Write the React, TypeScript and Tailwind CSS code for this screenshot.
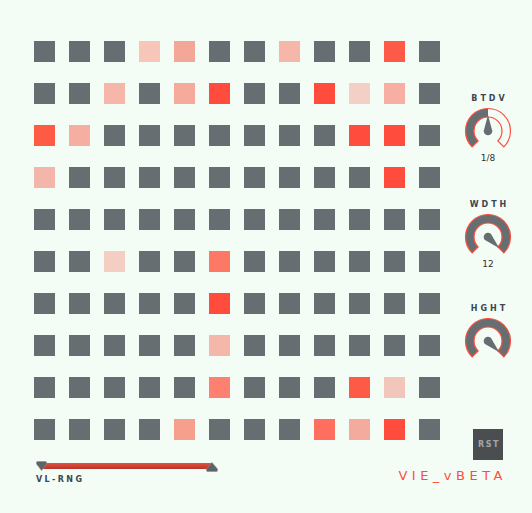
import type { ReactNode } from 'react'

const G = null
const CELLS: (string | null)[][] = [
  [G, G, G, '#f7c6b9', '#f5a797', G, G, '#f6b7aa', G, G, '#ff5a48', G],
  [G, G, '#f6b6aa', G, '#f5aa9c', '#ff4c3c', G, G, '#ff4c3c', '#f4cfc6', '#f7afa3', G],
  ['#ff5a43', '#f7aea2', G, G, G, G, G, G, G, '#ff4c3c', '#ff4c3c', G],
  ['#f4b5aa', G, G, G, G, G, G, G, G, G, '#ff4c3c', G],
  [G, G, G, G, G, G, G, G, G, G, G, G],
  [G, G, '#f4cdc3', G, G, '#fe7866', G, G, G, G, G, G],
  [G, G, G, G, G, '#ff4c3c', G, G, G, G, G, G],
  [G, G, G, G, G, '#f4b7aa', G, G, G, G, G, G],
  [G, G, G, G, G, '#fd8070', G, G, G, '#ff5a45', '#f3c6bb', G],
  [G, G, G, G, '#f79f8d', G, G, G, '#ff6e5f', '#f4ab9e', '#ff4c3c', G],
]

const GRAY = '#676e71'
const RED = '#ff4c3c'

// angle in degrees, clockwise from 12 o'clock
function pt(cx: number, cy: number, r: number, a: number) {
  const rad = (a * Math.PI) / 180
  return [cx + r * Math.sin(rad), cy - r * Math.cos(rad)]
}

function ring(a0: number, a1: number, ro: number, ri: number) {
  const large = a1 - a0 > 180 ? 1 : 0
  const [x0, y0] = pt(24, 24, ro, a0)
  const [x1, y1] = pt(24, 24, ro, a1)
  const [x2, y2] = pt(24, 24, ri, a1)
  const [x3, y3] = pt(24, 24, ri, a0)
  return `M${x0} ${y0} A${ro} ${ro} 0 ${large} 1 ${x1} ${y1} L${x2} ${y2} A${ri} ${ri} 0 ${large} 0 ${x3} ${y3} Z`
}

function Knob({ value }: { value: number }) {
  // value 0..1 mapped to -135..135
  const angle = -135 + value * 270
  return (
    <svg width="48" height="46" viewBox="0 0 48 46" className="block">
      <path d={ring(-135, angle, 22.5, 14)} fill={GRAY} />
      <path d={ring(-135, 135, 22.5, 14)} fill="none" stroke={RED} strokeWidth="1.2" />
      <g transform={`translate(24 24) rotate(${angle})`}>
        <path d="M-4.3 0 L0 -16 L4.3 0 A4.3 4.3 0 0 1 -4.3 0 Z" fill={GRAY} />
      </g>
    </svg>
  )
}

function KnobBlock({
  label,
  value,
  readout,
  className,
}: {
  label: string
  value: number
  readout?: ReactNode
  className?: string
}) {
  return (
    <div className={`flex flex-col items-center ${className ?? ''}`}>
      <div className="text-[8px] leading-[10px] font-bold tracking-[3px] pl-[3px] text-[#3b4752]">
        {label}
      </div>
      <div className="mt-[3px]">
        <Knob value={value} />
      </div>
      {readout && (
        <div className="text-[9px] leading-[10px] text-[#2f3336]">{readout}</div>
      )}
    </div>
  )
}

export default function App() {
  return (
    <div
      className="w-[532px] h-[513px] bg-[#f4fdf5] overflow-hidden pt-[41px] pl-[34px] flex items-start"
      style={{ fontFamily: '"DejaVu Sans", Verdana, sans-serif' }}
    >
      {/* sequencer grid + range slider */}
      <div className="flex flex-col">
        <div className="grid grid-cols-[repeat(12,21px)] auto-rows-[21px] gap-x-[14px] gap-y-[21px]">
          {CELLS.flatMap((row, r) =>
            row.map((c, i) => (
              <div key={`${r}-${i}`} className="w-[21px] h-[21px]" style={{ backgroundColor: c ?? GRAY }} />
            ))
          )}
        </div>

        <div className="relative ml-[2px] mt-[21px] w-[182px] h-[11px]">
          <div className="absolute left-[4px] right-[6px] top-[2px] h-[6px] bg-gradient-to-b from-[#e4513f] to-[#b8342a]" />
          <svg width="11" height="10" viewBox="0 0 11 10" className="absolute left-0 top-0">
            <path d="M0.5 1.5 Q0.5 0.5 1.5 0.5 L9.5 0.5 Q10.5 0.5 10.5 1.5 L10.5 3 L5.5 9.5 L0.5 3 Z" fill="#5d6366" stroke="#8a8f92" strokeWidth="0.6" />
          </svg>
          <svg width="12" height="10" viewBox="0 0 12 10" className="absolute right-0 top-[1px]">
            <path d="M6 0.5 L11.5 7 L11.5 8.5 Q11.5 9.5 10.5 9.5 L1.5 9.5 Q0.5 9.5 0.5 8.5 L0.5 7 Z" fill="#5d6366" stroke="#8a8f92" strokeWidth="0.6" />
          </svg>
        </div>
        <div className="ml-[2px] mt-[3px] text-[8px] leading-[10px] font-bold tracking-[2.4px] text-[#3b4752]">
          VL-RNG
        </div>
      </div>

      {/* knobs + reset */}
      <div className="ml-[24px] w-[48px] flex flex-col items-center">
        <KnobBlock label="BTDV" value={0.5} readout="1/8" className="mt-[53px]" />
        <KnobBlock label="WDTH" value={1} readout="12" className="mt-[37px]" />
        <KnobBlock label="HGHT" value={1} className="mt-[35px]" />
        <button
          type="button"
          className="mt-[66px] w-[30px] h-[31px] bg-[#4a4e51] text-[8px] font-bold tracking-[1.5px] pl-[2px] text-[#a2a7aa] flex items-center justify-center"
        >
          RST
        </button>
        <div className="self-end mr-[5px] mt-[8px] whitespace-nowrap text-[13px] leading-[16px] tracking-[4.5px] text-[#ff4c3c]">
          VIE_vBETA
        </div>
      </div>
    </div>
  )
}
